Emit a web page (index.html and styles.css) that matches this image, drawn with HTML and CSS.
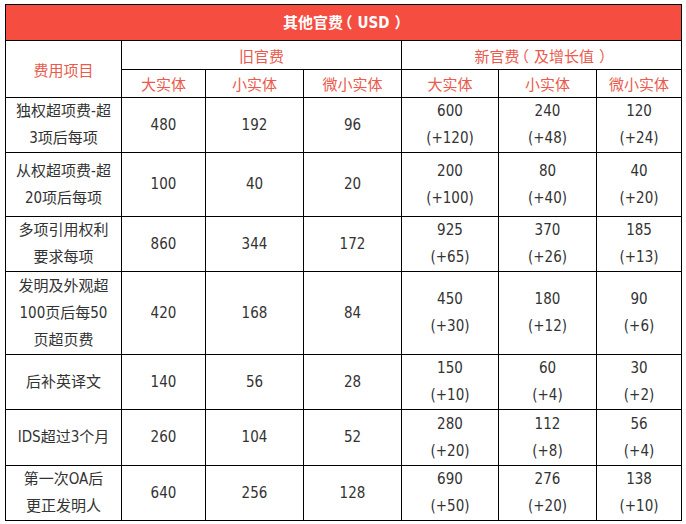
FILE: index.html
```html
<!DOCTYPE html>
<html lang="zh-CN">
<head>
<meta charset="utf-8">
<link rel="stylesheet" href="styles.css">
</head>
<body>
<table class="fees">
  <colgroup>
    <col class="c-item"><col class="c-a"><col class="c-b"><col class="c-b"><col class="c-c"><col class="c-b"><col class="c-d">
  </colgroup>
  <tr class="r-title"><th colspan="7" class="title">其他官费<span class="po">（</span>USD<span class="pc">）</span></th></tr>
  <tr class="r-sub1">
    <th rowspan="2" class="sub">费用项目</th>
    <th colspan="3" class="sub">旧官费</th>
    <th colspan="3" class="sub">新官费<span class="po">（</span>及增长值<span class="pc">）</span></th>
  </tr>
  <tr class="r-sub2">
    <th class="sub">大实体</th><th class="sub">小实体</th><th class="sub">微小实体</th>
    <th class="sub">大实体</th><th class="sub">小实体</th><th class="sub">微小实体</th>
  </tr>
  <tr class="r-55">
    <td>独权超项费-超<br>3项后每项</td><td>480</td><td>192</td><td>96</td>
    <td>600<br>(+120)</td><td>240<br>(+48)</td><td>120<br>(+24)</td>
  </tr>
  <tr class="r-64">
    <td>从权超项费-超<br>20项后每项</td><td>100</td><td>40</td><td>20</td>
    <td>200<br>(+100)</td><td>80<br>(+40)</td><td>40<br>(+20)</td>
  </tr>
  <tr class="r-55">
    <td>多项引用权利<br>要求每项</td><td>860</td><td>344</td><td>172</td>
    <td>925<br>(+65)</td><td>370<br>(+26)</td><td>185<br>(+13)</td>
  </tr>
  <tr class="r-83">
    <td>发明及外观超<br>100页后每50<br>页超页费</td><td>420</td><td>168</td><td>84</td>
    <td>450<br>(+30)</td><td>180<br>(+12)</td><td>90<br>(+6)</td>
  </tr>
  <tr class="r-55">
    <td>后补英译文</td><td>140</td><td>56</td><td>28</td>
    <td>150<br>(+10)</td><td>60<br>(+4)</td><td>30<br>(+2)</td>
  </tr>
  <tr class="r-56">
    <td>IDS超过3个月</td><td>260</td><td>104</td><td>52</td>
    <td>280<br>(+20)</td><td>112<br>(+8)</td><td>56<br>(+4)</td>
  </tr>
  <tr class="r-55">
    <td>第一次OA后<br>更正发明人</td><td>640</td><td>256</td><td>128</td>
    <td>690<br>(+50)</td><td>276<br>(+20)</td><td>138<br>(+10)</td>
  </tr>
</table>
</body>
</html>
```

FILE: styles.css
```css
html, body {
  margin: 0;
  padding: 0;
  background: #ffffff;
}
body {
  padding: 4px 0 0 5px;
  font-family: "DejaVu Sans", "Noto Sans CJK SC", sans-serif;
  font-stretch: condensed;
}
.fees {
  border-collapse: collapse;
  table-layout: fixed;
  width: 677px;
  font-size: 15px;
  color: #333333;
}
.c-item { width: 116px; }
.c-a { width: 84px; }
.c-b { width: 98px; }
.c-c { width: 97px; }
.c-d { width: 85px; }
.fees th, .fees td {
  border: 1px solid #000000;
  padding: 0;
  text-align: center;
  vertical-align: middle;
  line-height: 27px;
  font-weight: normal;
}
.fees .title {
  background: #f54d3f;
  color: #ffffff;
  font-weight: bold;
  font-size: 15px;
}
.po,
.pc {
  font-family: "Noto Sans CJK SC", sans-serif;
  font-feature-settings: "halt" 1;
}
.po {
  padding-left: 2px;
  padding-right: 5px;
}
.pc {
  padding-left: 5px;
  padding-right: 2px;
}
.fees .sub {
  color: #ea5a4d;
  padding-top: 3px;
  line-height: 24px;
}
.r-title { height: 36px; }
.r-sub1 { height: 29px; }
.r-sub2 { height: 28px; }
.r-55 { height: 55px; }
.r-56 { height: 56px; }
.r-64 { height: 64px; }
.r-83 { height: 83px; }
```
